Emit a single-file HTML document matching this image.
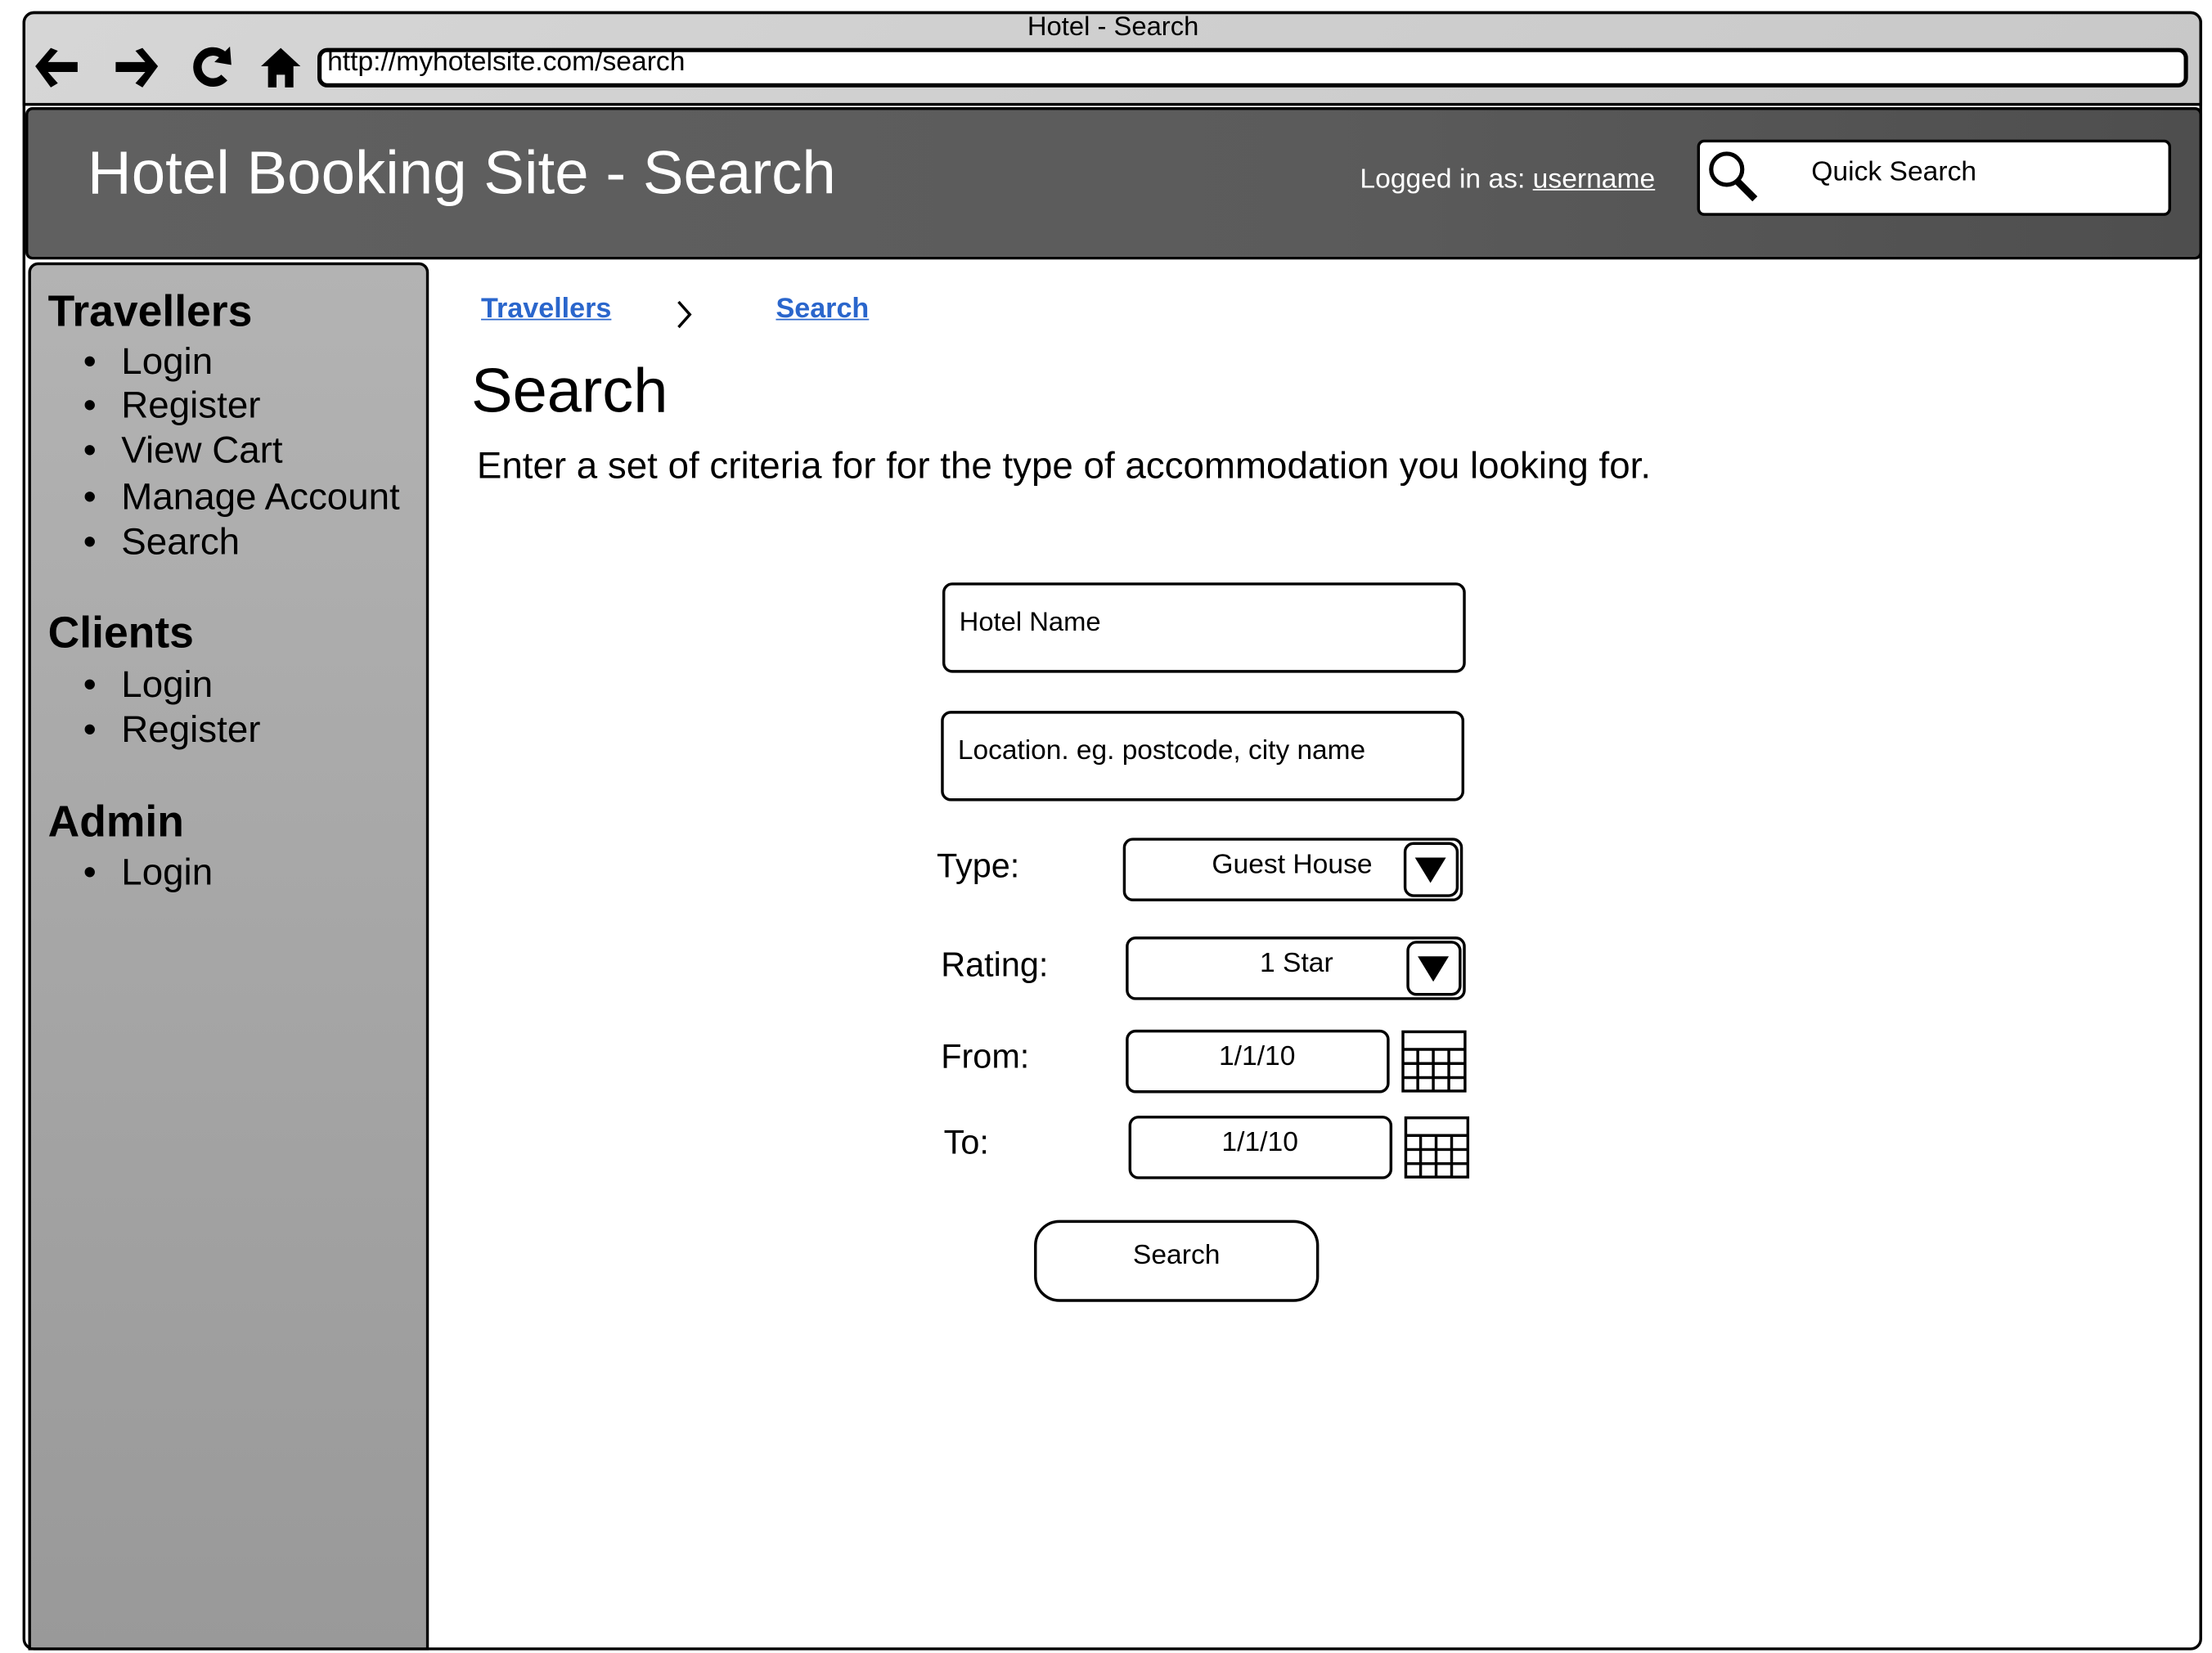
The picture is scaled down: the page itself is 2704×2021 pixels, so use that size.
<!DOCTYPE html>
<html><head><meta charset="utf-8"><style>
html,body{margin:0;padding:0;background:#fff;width:2704px;height:2021px;overflow:hidden}
#w{position:absolute;left:0;top:0;width:1568px;height:1172px;transform:scale(1.72449);transform-origin:0 0;font-family:"Liberation Sans",sans-serif;color:#000}
.a{position:absolute;box-sizing:border-box}
.t{position:absolute;white-space:nowrap;line-height:1}
.box{position:absolute;box-sizing:border-box;border:2.5px solid #000;border-radius:7px;background:#fff}
ul{margin:0;padding:0;list-style:none}
.side h2{position:absolute;left:12px;margin:0;font-size:31px;font-weight:bold;line-height:1}
.side li{position:absolute;left:64px;font-size:26.5px;line-height:1;white-space:nowrap}
.side li:before{content:"•";position:absolute;left:-27px}
</style></head><body><div id="w">
<div class="a" style="left:16px;top:8px;width:1545px;height:1162px;border:2px solid #000;border-radius:8px;background:#fff"></div>
<div class="a" style="left:16px;top:8px;width:1545px;height:67px;border:2px solid #000;border-radius:8px 8px 0 0;background:linear-gradient(135deg,#d6d6d6,#c8c8c8)"></div>
<div class="t" style="left:0;width:1578px;text-align:center;top:10px;font-size:19px">Hotel - Search</div>
<svg class="a" style="left:22px;top:30px" width="200" height="36" viewBox="0 0 200 36">
<path d="M3 17 L14 4 L19 6 L12 14 L33 14 L33 21 L12 21 L19 29 L14 32 Z"/>
<path d="M90 17 L79 4 L74 6 L81 14 L60 14 L60 21 L81 21 L74 29 L79 32 Z"/>
<path d="M136 9 A11 11 0 1 0 137 25" fill="none" stroke="#000" stroke-width="6"/>
<path d="M130 14 L142 16 L141 3Z"/>
<path d="M163 17 L177 4 L191 17 L186 17 L186 32 L180 32 L180 23 L174 23 L174 32 L168 32 L168 17Z"/>
</svg>
<div class="a" style="left:225px;top:34px;width:1326px;height:28px;border:3px solid #000;border-radius:7px;background:#fff"></div>
<div class="t" style="left:232px;top:35px;font-size:19.5px">http://myhotelsite.com/search</div>
<div class="a" style="left:18px;top:76px;width:1543px;height:108px;border:2px solid #000;border-radius:5px;background:linear-gradient(90deg,#606060,#5b5b5b 60%,#4e4e4e)"></div>
<div class="t" style="left:62px;top:102px;font-size:43.2px;color:#fff">Hotel Booking Site - Search</div>
<div class="t" style="left:964px;top:118px;font-size:19.5px;color:#fff">Logged in as: <u>username</u></div>
<div class="a" style="left:1203px;top:99px;width:336px;height:54px;border:2px solid #000;border-radius:5px;background:#fff"></div>
<svg class="a" style="left:1210px;top:106px" width="40" height="40" viewBox="0 0 40 40"><circle cx="14" cy="14" r="11" fill="none" stroke="#000" stroke-width="3"/><path d="M21 22 L34 35" stroke="#000" stroke-width="5"/></svg>
<div class="t" style="left:1284px;top:113px;font-size:19.5px">Quick Search</div>
<div class="a side" style="left:20px;top:186px;width:284px;height:984px;border:2px solid #000;border-radius:7px 7px 0 0;background:linear-gradient(180deg,#b3b3b3,#999)">
<h2 style="top:17px">Travellers</h2>
<ul><li style="top:55px">Login</li><li style="top:86px">Register</li><li style="top:118px">View Cart</li><li style="top:151px">Manage Account</li><li style="top:183px">Search</li></ul>
<h2 style="top:245px">Clients</h2>
<ul><li style="top:284px">Login</li><li style="top:316px">Register</li></ul>
<h2 style="top:379px">Admin</h2>
<ul><li style="top:417px">Login</li></ul>
</div>
<div class="t" style="left:341px;top:210px;font-size:19.8px;font-weight:bold;color:#2a66cc;text-decoration:underline">Travellers</div>
<svg class="a" style="left:478px;top:212px" width="14" height="22"><path d="M3 2 L11 11 L3 20" fill="none" stroke="#000" stroke-width="2"/></svg>
<div class="t" style="left:550px;top:210px;font-size:19.8px;font-weight:bold;color:#2a66cc;text-decoration:underline">Search</div>
<div class="t" style="left:334px;top:256px;font-size:44px">Search</div>
<div class="t" style="left:338px;top:317px;font-size:26.5px">Enter a set of criteria for for the type of accommodation you looking for.</div>
<div class="box" style="left:668px;top:413px;width:371px;height:64px"></div>
<div class="t" style="left:680px;top:432px;font-size:19px">Hotel Name</div>
<div class="box" style="left:667px;top:504px;width:371px;height:64px"></div>
<div class="t" style="left:679px;top:523px;font-size:19.4px">Location. eg. postcode, city name</div>
<div class="t" style="left:664px;top:603px;font-size:24px">Type:</div>
<div class="box" style="left:796px;top:594px;width:241px;height:45px"></div>
<div class="t" style="left:859px;top:604px;font-size:19.5px">Guest House</div>
<div class="box" style="left:995px;top:597px;width:39px;height:39px"><svg width="34" height="34" style="position:absolute;left:0;top:0"><path d="M6 9 L28 9 L17 27Z"/></svg></div>
<div class="t" style="left:667px;top:673px;font-size:24px">Rating:</div>
<div class="box" style="left:798px;top:664px;width:241px;height:45px"></div>
<div class="t" style="left:893px;top:674px;font-size:19.5px">1 Star</div>
<div class="box" style="left:997px;top:667px;width:39px;height:39px"><svg width="34" height="34" style="position:absolute;left:0;top:0"><path d="M6 9 L28 9 L17 27Z"/></svg></div>
<div class="t" style="left:667px;top:738px;font-size:24px">From:</div>
<div class="box" style="left:798px;top:730px;width:187px;height:45px"></div>
<div class="t" style="left:864px;top:740px;font-size:19.5px">1/1/10</div>
<svg class="a" style="left:993px;top:730px" width="47" height="45"><g fill="none" stroke="#000" stroke-width="2"><rect x="1.5" y="1.5" width="44" height="42"/><path d="M1.5 14H45.5M1.5 24H45.5M1.5 34H45.5M12 14V43.5M23 14V43.5M34 14V43.5"/></g></svg>
<div class="t" style="left:669px;top:799px;font-size:24px">To:</div>
<div class="box" style="left:800px;top:791px;width:187px;height:45px"></div>
<div class="t" style="left:866px;top:801px;font-size:19.5px">1/1/10</div>
<svg class="a" style="left:995px;top:791px" width="47" height="45"><g fill="none" stroke="#000" stroke-width="2"><rect x="1.5" y="1.5" width="44" height="42"/><path d="M1.5 14H45.5M1.5 24H45.5M1.5 34H45.5M12 14V43.5M23 14V43.5M34 14V43.5"/></g></svg>
<div class="box" style="left:733px;top:865px;width:202px;height:58px;border-radius:18px"></div>
<div class="t" style="left:733px;width:202px;text-align:center;top:881px;font-size:19.5px">Search</div>
</div></body></html>
